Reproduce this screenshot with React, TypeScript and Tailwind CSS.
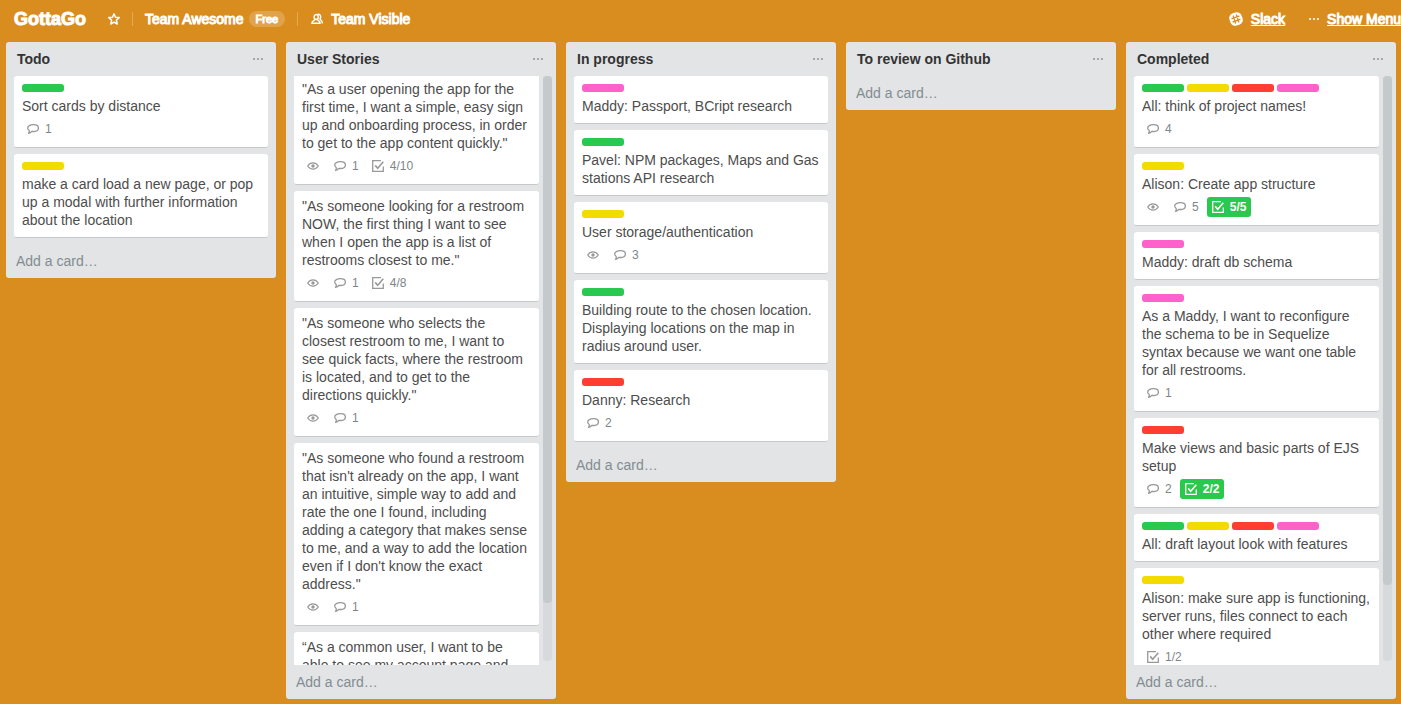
import { useEffect, useRef } from "react";

type Label = "green" | "yellow" | "red" | "pink";

type Card = {
  text: string;
  labels?: Label[];
  watching?: boolean;
  comments?: number;
  checklist?: { done: number; total: number };
};

type List = {
  title: string;
  cards: Card[];
  scroll?: { offset: number; thumb: string };
};

const labelColors: Record<Label, string> = {
  green: "bg-[#29c84e]",
  yellow: "bg-[#f3db00]",
  red: "bg-[#ff3e33]",
  pink: "bg-[#ff61cb]",
};

const lists: List[] = [
  {
    title: "Todo",
    cards: [
      { labels: ["green"], text: "Sort cards by distance", comments: 1 },
      {
        labels: ["yellow"],
        text: "make a card load a new page, or pop up a modal with further information about the location",
      },
    ],
  },
  {
    title: "User Stories",
    scroll: { offset: 2, thumb: "h-[90%]" },
    cards: [
      {
        text: '"As a user opening the app for the first time, I want a simple, easy sign up and onboarding process, in order to get to the app content quickly."',
        watching: true,
        comments: 1,
        checklist: { done: 4, total: 10 },
      },
      {
        text: '"As someone looking for a restroom NOW, the first thing I want to see when I open the app is a list of restrooms closest to me."',
        watching: true,
        comments: 1,
        checklist: { done: 4, total: 8 },
      },
      {
        text: '"As someone who selects the closest restroom to me, I want to\nsee quick facts, where the restroom is located, and to get to the directions quickly."',
        watching: true,
        comments: 1,
      },
      {
        text: '"As someone who found a restroom that isn\'t already on the app, I want an intuitive, simple way to add and rate the one I found, including adding a category that makes sense to me, and a way to add the location even if I don\'t know the exact address."',
        watching: true,
        comments: 1,
      },
      { text: "“As a common user, I want to be able to see my account page and" },
    ],
  },
  {
    title: "In progress",
    cards: [
      { labels: ["pink"], text: "Maddy: Passport, BCript research" },
      { labels: ["green"], text: "Pavel: NPM packages, Maps and Gas stations API research" },
      { labels: ["yellow"], text: "User storage/authentication", watching: true, comments: 3 },
      {
        labels: ["green"],
        text: "Building route to the chosen location. Displaying locations on the map in radius around user.",
      },
      { labels: ["red"], text: "Danny: Research", comments: 2 },
    ],
  },
  { title: "To review on Github", cards: [] },
  {
    title: "Completed",
    scroll: { offset: 0, thumb: "h-[87%]" },
    cards: [
      { labels: ["green", "yellow", "red", "pink"], text: "All: think of project names!", comments: 4 },
      {
        labels: ["yellow"],
        text: "Alison: Create app structure",
        watching: true,
        comments: 5,
        checklist: { done: 5, total: 5 },
      },
      { labels: ["pink"], text: "Maddy: draft db schema" },
      {
        labels: ["pink"],
        text: "As a Maddy, I want to reconfigure the schema to be in Sequelize syntax because we want one table for all restrooms.",
        comments: 1,
      },
      {
        labels: ["red"],
        text: "Make views and basic parts of EJS setup",
        comments: 2,
        checklist: { done: 2, total: 2 },
      },
      { labels: ["green", "yellow", "red", "pink"], text: "All: draft layout look with features" },
      {
        labels: ["yellow"],
        text: "Alison: make sure app is functioning, server runs, files connect to each other where required",
        checklist: { done: 1, total: 2 },
      },
    ],
  },
];

function StarIcon() {
  return (
    <svg className="size-3" viewBox="0 0 12 12" fill="none" stroke="currentColor" strokeWidth="1.5" strokeLinejoin="round">
      <path d="M6 .9 7.5 4.2l3.7.4-2.8 2.5.8 3.900L6 9.200l-3.200 1.800.8-3.900L.8 4.600l3.700-.4z" />
    </svg>
  );
}

function MembersIcon() {
  return (
    <svg className="size-3" viewBox="0 0 12 12" fill="none" stroke="currentColor" strokeWidth="1.4" strokeLinejoin="round" strokeLinecap="round">
      <ellipse cx="5.2" cy="4" rx="2.1" ry="2.5" />
      <path d="M3.900 6.400C3.400 7.800 1 7.700.8 10.300h8.400C9 7.700 7 7.800 6.500 6.400" />
      <path d="M7.200 1.200c2.600 0 3 3 1.800 4.600.3 1.300 2 1.500 2.300 4" />
    </svg>
  );
}

function SlackIcon() {
  return (
    <svg className="size-3.5" viewBox="0 0 14 14" fill="none">
      <g transform="rotate(-18 7 7)">
        <rect x="0.6" y="0.6" width="12.8" height="12.8" rx="5" fill="#fff" />
        <path stroke="#d98d1f" strokeWidth="1.3" strokeLinecap="round" d="M5.300 3.300v7.400M8.700 3.300v7.400M3.300 5.300h7.400M3.300 8.700h7.400" />
      </g>
    </svg>
  );
}

function DotsIcon() {
  return (
    <svg className="h-3 w-2.5" viewBox="0 0 10 12" fill="currentColor">
      <circle cx="1.1" cy="6" r="1.1" />
      <circle cx="5" cy="6" r="1.1" />
      <circle cx="8.9" cy="6" r="1.1" />
    </svg>
  );
}

function EyeIcon() {
  return (
    <svg className="size-3 text-[#999]" viewBox="0 0 12 12" fill="none" stroke="currentColor" strokeWidth="1.2">
      <path d="M.7 6C3.400 1.900 8.600 1.900 11.300 6 8.600 10.100 3.400 10.100.7 6z" />
      <circle cx="6" cy="6" r="1.7" fill="currentColor" stroke="none" />
    </svg>
  );
}

function CommentIcon() {
  return (
    <svg className="size-3 text-[#999]" viewBox="0 0 12 12" fill="none" stroke="currentColor" strokeWidth="1.3" strokeLinejoin="round">
      <path d="M6.400 1.700c2.900 0 5 1.200 5 3.300S9.300 8.500 6.400 8.500c-.6 0-1.200 0-1.700-.2-.7 1.100-1.700 1.700-3.200 2 .7-.9.900-1.800.7-2.800C1.300 6.900.7 6.100.7 5.100c0-2.100 2.500-3.400 5.700-3.400z" />
    </svg>
  );
}

function ChecklistIcon() {
  return (
    <svg className="size-3" viewBox="0 0 12 12" fill="none" stroke="currentColor" strokeWidth="1.3">
      <path d="M9 .7H.7v10.600h10.600V6.500" />
      <path strokeWidth="1.6" d="m3.200 5.400 2.500 2.800 5.600-6.400" />
    </svg>
  );
}

function Badges({ card }: { card: Card }) {
  const { watching, comments, checklist } = card;
  const complete = checklist && checklist.done === checklist.total;
  return (
    <div className="mt-1 flex h-5 items-center gap-2 text-xs text-[#7c868b]">
      {watching && (
        <span className="flex pr-0.5 pl-[5px]" role="img" aria-label="Watching">
          <EyeIcon />
        </span>
      )}
      {comments !== undefined && (
        <span className="flex items-center gap-1.5 pl-[5px]">
          <CommentIcon />
          {comments}
        </span>
      )}
      {checklist && (
        <span
          className={
            complete
              ? "flex h-5 items-center gap-1.5 rounded-[3px] bg-[#29c84e] px-[5px] font-bold text-white"
              : "flex items-center gap-1.5 pl-[5px]"
          }
        >
          <span className={complete ? "text-white" : "text-[#999]"}>
            <ChecklistIcon />
          </span>
          {checklist.done}/{checklist.total}
        </span>
      )}
    </div>
  );
}

function CardView({ card }: { card: Card }) {
  const hasBadges = card.watching || card.comments !== undefined || card.checklist;
  return (
    <li
      className={`mb-1.5 shrink-0 rounded-[3px] border-b border-[#c5c8ca] bg-white px-2 pb-2 ${
        card.labels ? "pt-2" : "pt-1.5"
      }`}
    >
      {card.labels && (
        <div className="mb-[5px] flex gap-[3px]">
          {card.labels.map((label) => (
            <span key={label} className={`h-2 w-[42px] rounded-[3px] ${labelColors[label]}`} />
          ))}
        </div>
      )}
      <p className="whitespace-pre-line">{card.text}</p>
      {hasBadges && <Badges card={card} />}
    </li>
  );
}

function ListView({ list }: { list: List }) {
  const cardsRef = useRef<HTMLUListElement>(null);

  useEffect(() => {
    if (cardsRef.current) cardsRef.current.scrollTop = list.scroll?.offset ?? 0;
  }, [list.scroll]);

  return (
    <section className="flex max-h-full w-[270px] shrink-0 flex-col rounded-[3px] bg-[#e2e4e6]">
      <header className="flex h-[34px] shrink-0 items-center justify-between pr-[13px] pl-[11px]">
        <h2 className="font-bold text-[#333]">{list.title}</h2>
        <button type="button" aria-label={`${list.title} actions`} className="text-[#999]">
          <DotsIcon />
        </button>
      </header>
      <div className={`flex min-h-0 gap-1 pl-2 ${list.scroll ? "pr-1" : "pr-2"}`}>
        <ul ref={cardsRef} className="flex min-w-0 flex-1 flex-col overflow-y-auto [scrollbar-width:none]">
          {list.cards.map((card) => (
            <CardView key={card.text} card={card} />
          ))}
        </ul>
        {list.scroll && (
          <div className="mb-1 w-[9px] shrink-0 rounded bg-[#d6dadc]">
            <div className={`rounded bg-[#c4c9cc] ${list.scroll.thumb}`} />
          </div>
        )}
      </div>
      <button type="button" className="h-[34px] shrink-0 px-2.5 text-left text-[#838c91]">
        Add a card…
      </button>
    </section>
  );
}

export default function App() {
  return (
    <div className="flex h-screen flex-col overflow-hidden bg-[#d98d1f] font-['Liberation_Sans',Arial,sans-serif] text-sm leading-[18px] text-[#4d4d4d]">
      <header className="flex h-[42px] shrink-0 items-center justify-between pb-1 pl-3.5 whitespace-nowrap text-white [-webkit-text-stroke:1px]">
        <div className="flex items-center">
          <h1 className="w-[94px] text-lg font-bold">GottaGo</h1>
          <button type="button" aria-label="Star board">
            <StarIcon />
          </button>
          <span className="ml-3 h-3.5 w-px bg-white/25" />
          <a href="#team" className="ml-3">
            Team Awesome
          </a>
          <span className="ml-[5px] flex h-4 items-center rounded-full bg-white/20 px-[7px] text-[11px]">Free</span>
          <span className="ml-3 h-3.5 w-px bg-white/25" />
          <button type="button" className="ml-[13px] flex items-center gap-2">
            <MembersIcon />
            Team Visible
          </button>
        </div>
        <div className="flex items-center">
          <SlackIcon />
          <a href="#slack" className="ml-2 underline">
            Slack
          </a>
          <span className="ml-6">
            <DotsIcon />
          </span>
          <a href="#menu" className="ml-2 underline">
            Show Menu
          </a>
        </div>
      </header>
      <main className="flex min-h-0 flex-1 items-start gap-2.5 overflow-x-auto px-1.5 pb-[5px] [scrollbar-width:none]">
        {lists.map((list) => (
          <ListView key={list.title} list={list} />
        ))}
      </main>
    </div>
  );
}
